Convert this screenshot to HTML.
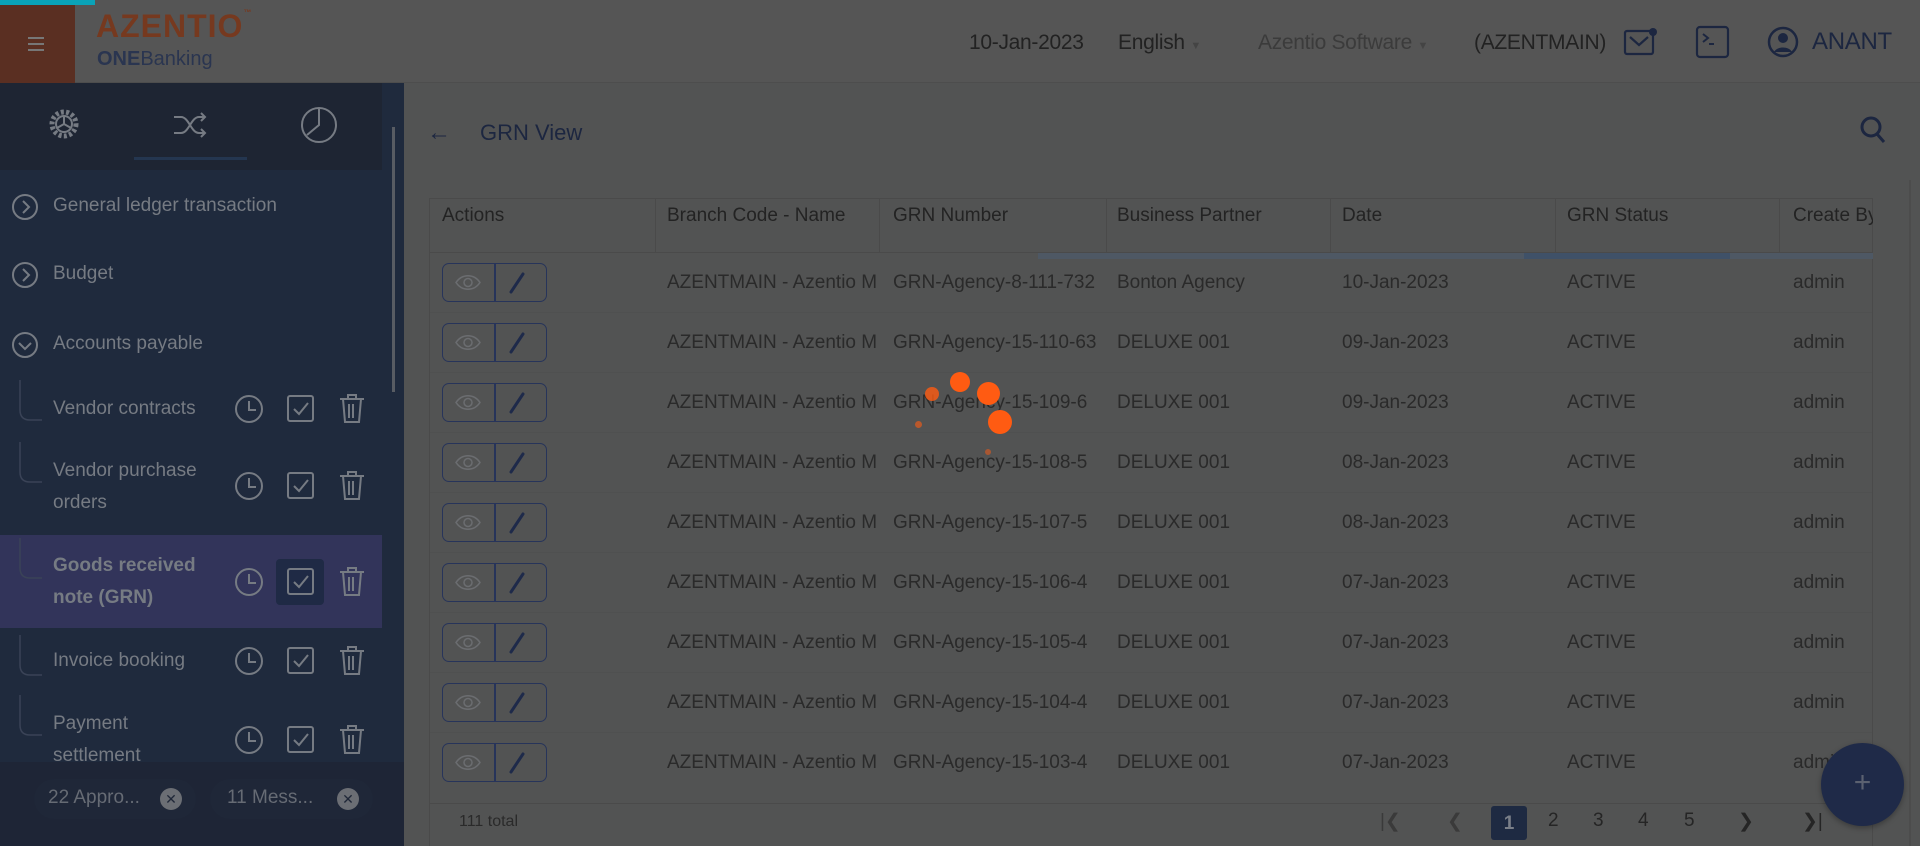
<!DOCTYPE html>
<html><head><meta charset="utf-8">
<style>
*{box-sizing:border-box;margin:0;padding:0}
body{width:1920px;height:846px;overflow:hidden;background:#525353;font-family:"Liberation Sans",sans-serif;position:relative;color:#262626}
.abs{position:absolute}
.hdr{left:0;top:0;width:1920px;height:83px;background:#555555;border-bottom:1px solid #4d4d4d}
.t{position:absolute;top:31px;font-size:21px;color:#222;white-space:nowrap;letter-spacing:-0.3px}
.side{left:0;top:83px;width:404px;height:763px;background:#1f2a3d}
.tabs{left:0;top:83px;width:382px;height:87px;background:#1e2533}
.mi{position:absolute;left:53px;font-size:19px;color:#767b83;line-height:32px}
.ic{position:absolute;stroke:#767b83;fill:none;stroke-width:2}
.tbl{left:429px;top:198px;width:1444px;height:648px;background:#525353;border:1px solid #4a4a4a}
.th{position:absolute;top:205px;font-size:19px;color:#232323}
.vl{position:absolute;top:198px;width:1px;height:54px;background:#4a4a4a}
.cell{position:absolute;font-size:19px;color:#2a2a2a;white-space:nowrap;overflow:hidden}
.btn{position:absolute;left:442px;width:105px;height:39px;border:1.5px solid #27345a;border-radius:7px}
.btn:after{content:"";position:absolute;left:51px;top:0;width:1.5px;height:100%;background:#27345a}
.rowline{position:absolute;left:430px;width:1442px;height:1px;background:#4f5050}
.pg{position:absolute;top:810px;font-size:19px;color:#252525}
.dot{position:absolute;border-radius:50%;background:#ff5b12}
</style></head><body>
<div class="abs hdr"></div>
<div class="abs" style="left:0;top:0;width:95px;height:5px;background:#0aa3b8"></div>
<div class="abs" style="left:0;top:5px;width:75px;height:78px;background:#5a2f22"></div>
<div class="abs" style="left:28px;top:37px;width:16px;height:2px;background:#777;box-shadow:0 6px 0 #777,0 12px 0 #777"></div>
<div class="abs" style="left:96px;top:8px;font-size:32px;font-weight:bold;color:#76391f;letter-spacing:1px">AZENTIO<span style="font-size:8px;vertical-align:top">™</span></div>
<div class="abs" style="left:97px;top:48px;font-size:20px;color:#2a3550"><b>ONE</b>Banking</div>
<div class="t" style="left:969px">10-Jan-2023</div>
<div class="t" style="left:1118px">English <span style="font-size:11px;color:#444">▼</span></div>
<div class="t" style="left:1258px;color:#3b3b3b">Azentio Software <span style="font-size:11px;color:#444">▼</span></div>
<div class="t" style="left:1474px">(AZENTMAIN)</div>
<svg class="abs" style="left:1623px;top:26px" width="36" height="32" viewBox="0 0 36 32"><rect x="2" y="5" width="28" height="23" rx="2" fill="none" stroke="#1c2640" stroke-width="2.2"/><path d="M7 11l9 8 9-8" fill="none" stroke="#1c2640" stroke-width="2.2"/><circle cx="30" cy="6" r="4" fill="#1c2640"/></svg>
<svg class="abs" style="left:1695px;top:25px" width="36" height="34" viewBox="0 0 36 34"><rect x="2" y="2" width="31" height="30" rx="3" fill="none" stroke="#1c2640" stroke-width="2.2"/><path d="M8 9l5 4-5 4M14 19h5" fill="none" stroke="#1c2640" stroke-width="2"/></svg>
<svg class="abs" style="left:1766px;top:25px" width="34" height="34" viewBox="0 0 34 34"><circle cx="17" cy="17" r="14" fill="none" stroke="#1c2640" stroke-width="2.5"/><circle cx="17" cy="13" r="5" fill="#1c2640"/><path d="M8 27c3-6 15-6 18 0z" fill="#1c2640"/></svg>
<div class="t" style="left:1812px;color:#1c2640;font-size:24px;top:28px">ANANT</div>

<div class="abs side"></div>
<div class="abs tabs"></div>
<div class="abs" style="left:392px;top:127px;width:3px;height:265px;background:#585c63"></div>
<svg class="ic" style="left:46px;top:106px" width="36" height="36" viewBox="0 0 36 36"><circle cx="18" cy="18" r="12" stroke-dasharray="3 2.3" stroke-width="5"/><circle cx="18" cy="18" r="8"/><path d="M18 18v-8M18 18l7 4M18 18l-7 4"/></svg>
<svg class="ic" style="left:171px;top:108px" width="38" height="34" viewBox="0 0 38 34"><path d="M3 9h7c8 0 10 16 18 16h6M3 25h7c8 0 10-16 18-16h6M30 5l4 4-4 4M30 21l4 4-4 4"/></svg>
<svg class="ic" style="left:299px;top:105px" width="40" height="40" viewBox="0 0 40 40"><circle cx="20" cy="20" r="17"/><path d="M20 3v17l-12 10"/></svg>
<div class="abs" style="left:134px;top:157px;width:113px;height:3px;background:#243650"></div>

<svg class="ic" style="left:11px;top:193px" width="28" height="28" viewBox="0 0 28 28"><circle cx="14" cy="14" r="12"/><path d="M12 8l6 6-6 6"/></svg>
<div class="mi" style="top:190px">General ledger transaction</div>
<svg class="ic" style="left:11px;top:261px" width="28" height="28" viewBox="0 0 28 28"><circle cx="14" cy="14" r="12"/><path d="M12 8l6 6-6 6"/></svg>
<div class="mi" style="top:258px">Budget</div>
<svg class="ic" style="left:11px;top:331px" width="28" height="28" viewBox="0 0 28 28"><circle cx="14" cy="14" r="12"/><path d="M8 12l6 6 6-6"/></svg>
<div class="mi" style="top:328px">Accounts payable</div>

<div class="abs" style="left:0;top:535px;width:382px;height:93px;background:#32345a"></div>
<div class="mi" style="top:393px">Vendor contracts</div>
<div class="mi" style="top:455px;line-height:32px">Vendor purchase<br>orders</div>
<div class="mi" style="top:550px;font-weight:bold;line-height:32px">Goods received<br>note (GRN)</div>
<div class="mi" style="top:645px">Invoice booking</div>
<div class="mi" style="top:708px;line-height:32px">Payment<br>settlement</div>
<div class="abs" style="left:276px;top:559px;width:48px;height:46px;background:#1f2a45;border-radius:4px"></div>
<svg class="abs" style="left:0;top:380px" width="60" height="380" viewBox="0 0 60 380" fill="none" stroke="#3a4357" stroke-width="1.5"><path d="M20 0v30q0 10 10 10h12M20 62v30q0 10 10 10h12M20 158v30q0 10 10 10h12M20 255v30q0 10 10 10h12M20 315v30q0 10 10 10h12"/></svg>
<svg class="abs" style="left:233px;top:382px" width="140" height="390" viewBox="0 0 140 390" fill="none" stroke="#767b83" stroke-width="2">
<g id="g"><circle cx="16" cy="27" r="13"/><path d="M16 19v9h7"/><rect x="55" y="14" width="25" height="25" rx="2"/><path d="M61 27l5 5 9-11"/><path d="M107 17h24M115 17v-4h8v4M110 17l2 23h14l2-23M116 22v14M120 22v14"/></g>
<use href="#g" y="77"/><use href="#g" y="173"/><use href="#g" y="252"/><use href="#g" y="331"/>
</svg>
<div class="abs" style="left:0;top:762px;width:404px;height:84px;background:#1e2536"></div>
<div class="abs" style="left:34px;top:779px;width:162px;height:40px;border-radius:20px;background:#1f2738"></div>
<div class="abs" style="left:48px;top:787px;font-size:19px;color:#666b74">22 Appro...</div>
<div class="abs" style="left:160px;top:788px;width:22px;height:22px;border-radius:50%;background:#6b6e74;color:#1f2738;font-size:14px;text-align:center;line-height:22px">✕</div>
<div class="abs" style="left:210px;top:779px;width:163px;height:40px;border-radius:20px;background:#1f2738"></div>
<div class="abs" style="left:227px;top:787px;font-size:19px;color:#666b74">11 Mess...</div>
<div class="abs" style="left:337px;top:788px;width:22px;height:22px;border-radius:50%;background:#6b6e74;color:#1f2738;font-size:14px;text-align:center;line-height:22px">✕</div>

<div class="abs" style="left:427px;top:119px;font-size:24px;color:#1c2640">←</div>
<div class="abs" style="left:480px;top:120px;font-size:22px;color:#1c2640">GRN View</div>
<svg class="abs" style="left:1859px;top:115px" width="28" height="30" viewBox="0 0 28 30" fill="none" stroke="#1c2640" stroke-width="3"><circle cx="12" cy="12" r="9"/><path d="M18 19l7 8"/></svg>
<div class="abs" style="left:1909px;top:180px;width:2px;height:666px;background:#4c4c4c"></div>

<div class="abs tbl"></div>
<div class="abs" style="left:430px;top:252px;width:1442px;height:1px;background:#4a4a4a"></div>
<div class="vl" style="left:655px"></div><div class="vl" style="left:879px"></div><div class="vl" style="left:1106px"></div><div class="vl" style="left:1330px"></div><div class="vl" style="left:1555px"></div><div class="vl" style="left:1779px"></div>
<div class="th" style="left:442px">Actions</div>
<div class="th" style="left:667px">Branch Code - Name</div>
<div class="th" style="left:893px">GRN Number</div>
<div class="th" style="left:1117px">Business Partner</div>
<div class="th" style="left:1342px">Date</div>
<div class="th" style="left:1567px">GRN Status</div>
<div class="th" style="left:1793px;width:80px;overflow:hidden;white-space:nowrap">Create By</div>
<div class="abs" style="left:1038px;top:253px;width:835px;height:6px;background:#4e5864"></div>
<div class="abs" style="left:1524px;top:253px;width:206px;height:6px;background:#3f5168"></div>

<div class="btn" style="top:263px"></div><div class="btn" style="top:323px"></div><div class="btn" style="top:383px"></div><div class="btn" style="top:443px"></div><div class="btn" style="top:503px"></div><div class="btn" style="top:563px"></div><div class="btn" style="top:623px"></div><div class="btn" style="top:683px"></div><div class="btn" style="top:743px"></div>
<svg class="abs" style="left:442px;top:263px" width="110" height="520" viewBox="0 0 110 520">
<g id="b" fill="none"><path d="M14 19.5c6-9 18-9 24 0-6 9-18 9-24 0z" stroke="#6b6d70" stroke-width="1.5"/><circle cx="26" cy="19.5" r="4" stroke="#6b6d70" stroke-width="1.5"/><path d="M69 29l12-18" stroke="#1e2a4a" stroke-width="3" stroke-linecap="round"/></g>
<use href="#b" y="60"/><use href="#b" y="120"/><use href="#b" y="180"/><use href="#b" y="240"/><use href="#b" y="300"/><use href="#b" y="360"/><use href="#b" y="420"/><use href="#b" y="480"/>
</svg>
<div class="rowline" style="top:312px"></div><div class="rowline" style="top:372px"></div><div class="rowline" style="top:432px"></div><div class="rowline" style="top:492px"></div><div class="rowline" style="top:552px"></div><div class="rowline" style="top:612px"></div><div class="rowline" style="top:672px"></div><div class="rowline" style="top:732px"></div>

<div class="cell" style="left:667px;top:253px;width:210px;line-height:60px">AZENTMAIN - Azentio M<br>AZENTMAIN - Azentio M<br>AZENTMAIN - Azentio M<br>AZENTMAIN - Azentio M<br>AZENTMAIN - Azentio M<br>AZENTMAIN - Azentio M<br>AZENTMAIN - Azentio M<br>AZENTMAIN - Azentio M<br>AZENTMAIN - Azentio M</div>
<div class="cell" style="left:893px;top:253px;width:211px;line-height:60px">GRN-Agency-8-111-732<br>GRN-Agency-15-110-63<br>GRN-Agency-15-109-6<br>GRN-Agency-15-108-5<br>GRN-Agency-15-107-5<br>GRN-Agency-15-106-4<br>GRN-Agency-15-105-4<br>GRN-Agency-15-104-4<br>GRN-Agency-15-103-4</div>
<div class="cell" style="left:1117px;top:253px;width:210px;line-height:60px">Bonton Agency<br>DELUXE 001<br>DELUXE 001<br>DELUXE 001<br>DELUXE 001<br>DELUXE 001<br>DELUXE 001<br>DELUXE 001<br>DELUXE 001</div>
<div class="cell" style="left:1342px;top:253px;width:210px;line-height:60px">10-Jan-2023<br>09-Jan-2023<br>09-Jan-2023<br>08-Jan-2023<br>08-Jan-2023<br>07-Jan-2023<br>07-Jan-2023<br>07-Jan-2023<br>07-Jan-2023</div>
<div class="cell" style="left:1567px;top:253px;width:210px;line-height:60px">ACTIVE<br>ACTIVE<br>ACTIVE<br>ACTIVE<br>ACTIVE<br>ACTIVE<br>ACTIVE<br>ACTIVE<br>ACTIVE</div>
<div class="cell" style="left:1793px;top:253px;width:80px;line-height:60px">admin<br>admin<br>admin<br>admin<br>admin<br>admin<br>admin<br>admin<br>admin</div>

<div class="abs" style="left:430px;top:803px;width:1442px;height:43px;background:#525353;border-top:1px solid #4a4a4a"></div>
<div class="abs" style="left:459px;top:813px;font-size:16px;color:#2a2a2a">111 total</div>
<div class="pg" style="left:1380px;color:#3a3a3a">|&#10094;</div>
<div class="pg" style="left:1447px;color:#3a3a3a">&#10094;</div>
<div class="abs" style="left:1491px;top:806px;width:36px;height:34px;background:#1e2a42;border-radius:3px;color:#7a7f88;font-size:19px;text-align:center;line-height:36px;font-weight:bold">1</div>
<div class="pg" style="left:1548px">2</div><div class="pg" style="left:1593px">3</div><div class="pg" style="left:1638px">4</div><div class="pg" style="left:1684px">5</div>
<div class="pg" style="left:1738px">&#10095;</div>
<div class="pg" style="left:1802px">&#10095;|</div>
<div class="abs" style="left:1821px;top:743px;width:83px;height:83px;border-radius:50%;background:#1f2a48;box-shadow:0 2px 6px rgba(0,0,0,.3);color:#5b6170;font-size:30px;text-align:center;line-height:80px">+</div>

<div class="dot" style="left:950px;top:372px;width:20px;height:20px"></div>
<div class="dot" style="left:977px;top:382px;width:23px;height:23px"></div>
<div class="dot" style="left:988px;top:410px;width:24px;height:24px"></div>
<div class="dot" style="left:925px;top:387px;width:14px;height:14px;opacity:.8"></div>
<div class="dot" style="left:915px;top:421px;width:7px;height:7px;opacity:.6"></div>
<div class="dot" style="left:985px;top:449px;width:6px;height:6px;opacity:.5"></div>
</body></html>
